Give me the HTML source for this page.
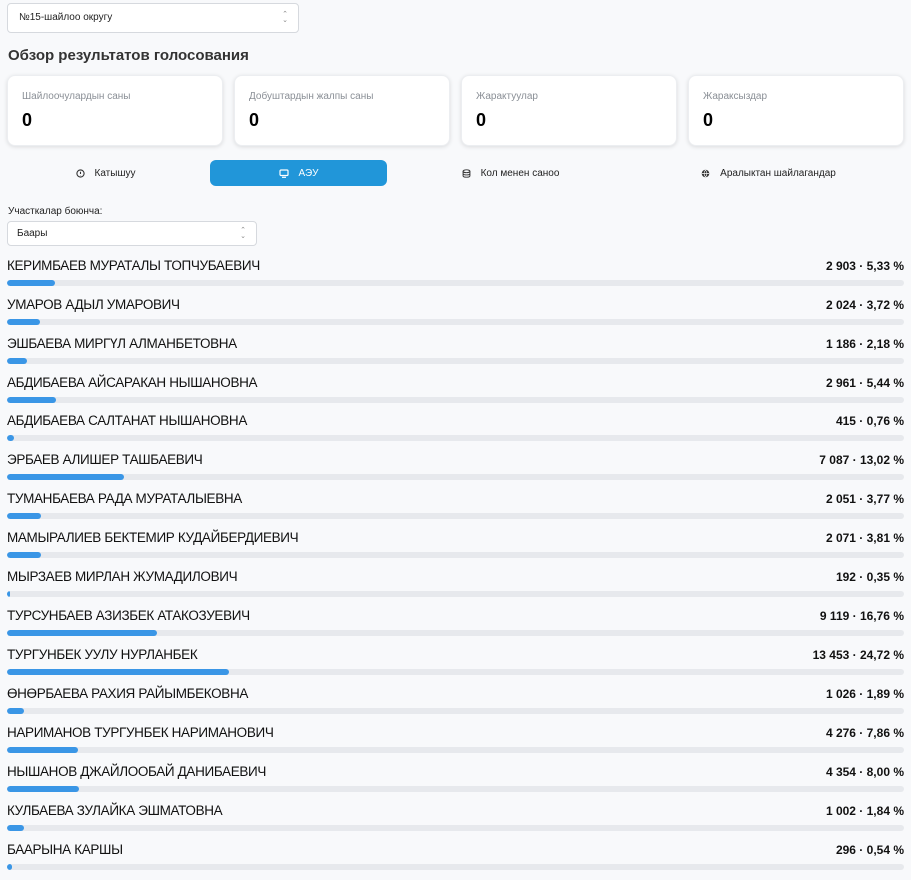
<!DOCTYPE html>
<html><head><meta charset="utf-8"><style>
*{box-sizing:border-box;margin:0;padding:0}
body{width:911px;height:880px;background:#f8f9fb;font-family:"Liberation Sans",Arial,sans-serif;color:#111;position:relative;overflow:hidden}
.sel{position:absolute;background:#fff;border:1px solid #d6d9de;border-radius:4px;font-size:10px;color:#222}
.sel .ar{position:absolute;right:10px;top:50%;transform:translateY(-50%);font-size:7px;color:#888;line-height:6px;text-align:center}
h1{position:absolute;left:8px;top:47px;font-size:15px;font-weight:bold;color:#333}
.card{position:absolute;top:75px;width:216px;height:71px;background:#fff;border-radius:8px;box-shadow:0 1px 4px rgba(0,0,0,.12);border:1px solid #eceef1}
.card .l{position:absolute;left:14px;top:15px;font-size:10px;color:#8a8f96}
.card .v{position:absolute;left:14px;top:34px;font-size:18px;font-weight:bold;color:#000}
.tab{position:absolute;top:160px;height:26px;width:177px;font-size:10px;display:flex;align-items:center;justify-content:center;gap:10px;color:#222}
.tab.a{background:#2196d9;color:#fff;border-radius:6px}
.row{position:absolute;left:7px;width:897px;height:39px}
.row .n{position:absolute;left:0;top:1px;font-size:13.5px;color:#111;letter-spacing:-.35px}
.row .p{position:absolute;right:0;top:2px;font-size:12px;font-weight:bold}
.row .t{position:absolute;left:0;top:23px;width:897px;height:6px;background:#e7e9ed;border-radius:3px;overflow:hidden}
.row .t i{display:block;height:6px;background:#3a96e6;border-radius:3px}
</style></head><body>
<div class="sel" style="left:7px;top:3px;width:292px;height:30px;line-height:28px;padding-left:11px">№15-шайлоо округу<span class="ar">⌃<br>⌄</span></div>
<h1>Обзор результатов голосования</h1>
<div class="card" style="left:7px"><div class="l">Шайлоочулардын саны</div><div class="v">0</div></div>
<div class="card" style="left:234px"><div class="l">Добуштардын жалпы саны</div><div class="v">0</div></div>
<div class="card" style="left:461px"><div class="l">Жарактуулар</div><div class="v">0</div></div>
<div class="card" style="left:688px"><div class="l">Жараксыздар</div><div class="v">0</div></div>
<div class="tab" style="left:17px"><svg width="9" height="9" viewBox="0 0 10 10"><circle cx="5" cy="5" r="4" fill="none" stroke="#333" stroke-width="1.2"/><path d="M5 3v2.5M5 6.8v.3" stroke="#333" stroke-width="1.2"/></svg>Катышуу</div>
<div class="tab a" style="left:210px"><svg width="10" height="9" viewBox="0 0 10 9"><rect x="1" y="1" width="8" height="5.5" rx="1" fill="none" stroke="#fff" stroke-width="1.2"/><path d="M3 8.3h4" stroke="#fff" stroke-width="1.2"/></svg>АЭУ</div>
<div class="tab" style="left:422px"><svg width="9" height="9" viewBox="0 0 10 10"><ellipse cx="5" cy="2.5" rx="3.8" ry="1.6" fill="none" stroke="#333" stroke-width="1.1"/><path d="M1.2 2.5v5c0 1 1.7 1.6 3.8 1.6s3.8-.6 3.8-1.6v-5M1.2 5c0 1 1.7 1.6 3.8 1.6S8.8 6 8.8 5" fill="none" stroke="#333" stroke-width="1.1"/></svg>Кол менен саноо</div>
<div class="tab" style="left:680px"><svg width="9" height="9" viewBox="0 0 10 10"><circle cx="5" cy="5" r="4.2" fill="#333"/><path d="M1 5h8M5 1c-2 2.5-2 5.5 0 8M5 1c2 2.5 2 5.5 0 8" fill="none" stroke="#fff" stroke-width=".7"/></svg>Аралыктан шайлагандар</div>
<div style="position:absolute;left:8px;top:206px;font-size:10px;color:#222">Участкалар боюнча:</div>
<div class="sel" style="left:7px;top:221px;width:250px;height:25px;line-height:23px;padding-left:9px">Баары<span class="ar">⌃<br>⌄</span></div>

<div class="row" style="top:257px"><div class="n">КЕРИМБАЕВ МУРАТАЛЫ ТОПЧУБАЕВИЧ</div><div class="p">2 903 · 5,33 %</div><div class="t"><i style="width:5.33%"></i></div></div>
<div class="row" style="top:296px"><div class="n">УМАРОВ АДЫЛ УМАРОВИЧ</div><div class="p">2 024 · 3,72 %</div><div class="t"><i style="width:3.72%"></i></div></div>
<div class="row" style="top:335px"><div class="n">ЭШБАЕВА МИРГҮЛ АЛМАНБЕТОВНА</div><div class="p">1 186 · 2,18 %</div><div class="t"><i style="width:2.18%"></i></div></div>
<div class="row" style="top:374px"><div class="n">АБДИБАЕВА АЙСАРАКАН НЫШАНОВНА</div><div class="p">2 961 · 5,44 %</div><div class="t"><i style="width:5.44%"></i></div></div>
<div class="row" style="top:412px"><div class="n">АБДИБАЕВА САЛТАНАТ НЫШАНОВНА</div><div class="p">415 · 0,76 %</div><div class="t"><i style="width:0.76%"></i></div></div>
<div class="row" style="top:451px"><div class="n">ЭРБАЕВ АЛИШЕР ТАШБАЕВИЧ</div><div class="p">7 087 · 13,02 %</div><div class="t"><i style="width:13.02%"></i></div></div>
<div class="row" style="top:490px"><div class="n">ТУМАНБАЕВА РАДА МУРАТАЛЫЕВНА</div><div class="p">2 051 · 3,77 %</div><div class="t"><i style="width:3.77%"></i></div></div>
<div class="row" style="top:529px"><div class="n">МАМЫРАЛИЕВ БЕКТЕМИР КУДАЙБЕРДИЕВИЧ</div><div class="p">2 071 · 3,81 %</div><div class="t"><i style="width:3.81%"></i></div></div>
<div class="row" style="top:568px"><div class="n">МЫРЗАЕВ МИРЛАН ЖУМАДИЛОВИЧ</div><div class="p">192 · 0,35 %</div><div class="t"><i style="width:0.35%"></i></div></div>
<div class="row" style="top:607px"><div class="n">ТУРСУНБАЕВ АЗИЗБЕК АТАКОЗУЕВИЧ</div><div class="p">9 119 · 16,76 %</div><div class="t"><i style="width:16.76%"></i></div></div>
<div class="row" style="top:646px"><div class="n">ТУРГУНБЕК УУЛУ НУРЛАНБЕК</div><div class="p">13 453 · 24,72 %</div><div class="t"><i style="width:24.72%"></i></div></div>
<div class="row" style="top:685px"><div class="n">ӨНӨРБАЕВА РАХИЯ РАЙЫМБЕКОВНА</div><div class="p">1 026 · 1,89 %</div><div class="t"><i style="width:1.89%"></i></div></div>
<div class="row" style="top:724px"><div class="n">НАРИМАНОВ ТУРГУНБЕК НАРИМАНОВИЧ</div><div class="p">4 276 · 7,86 %</div><div class="t"><i style="width:7.86%"></i></div></div>
<div class="row" style="top:763px"><div class="n">НЫШАНОВ ДЖАЙЛООБАЙ ДАНИБАЕВИЧ</div><div class="p">4 354 · 8,00 %</div><div class="t"><i style="width:8%"></i></div></div>
<div class="row" style="top:802px"><div class="n">КУЛБАЕВА ЗУЛАЙКА ЭШМАТОВНА</div><div class="p">1 002 · 1,84 %</div><div class="t"><i style="width:1.84%"></i></div></div>
<div class="row" style="top:841px"><div class="n">БААРЫНА КАРШЫ</div><div class="p">296 · 0,54 %</div><div class="t"><i style="width:0.54%"></i></div></div>
</body></html>
